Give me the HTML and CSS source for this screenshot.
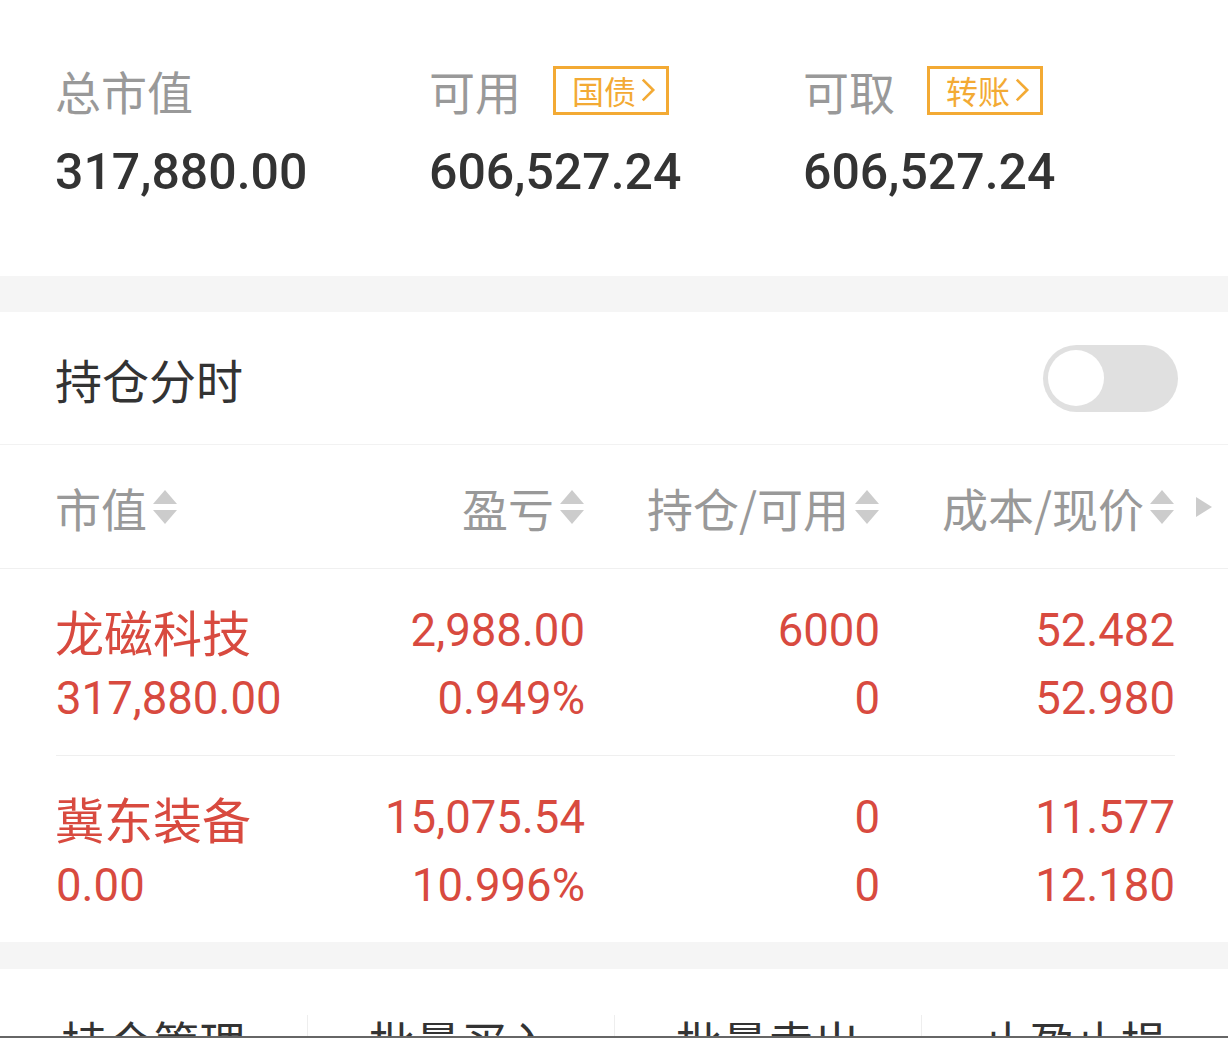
FILE: index.html
```html
<!DOCTYPE html>
<html lang="zh-CN">
<head>
  <meta charset="UTF-8" />
  <meta name="viewport" content="width=device-width, initial-scale=1" />
  <title>持仓</title>
  <link rel="stylesheet" href="styles.css">
</head>
<body>
  <div class="page">
    <div class="summary">
      <div class="summary-item">
        <div class="summary-label"><span>总市值</span></div>
        <div class="summary-value">317,880.00</div>
      </div>
      <div class="summary-item">
        <div class="summary-label"><span>可用</span><span class="tag">国债<svg viewBox="0 0 12 20" width="16" height="26"><path d="M2 2 L10 10 L2 18" fill="none" stroke="currentColor" stroke-width="2"/></svg></span></div>
        <div class="summary-value">606,527.24</div>
      </div>
      <div class="summary-item">
        <div class="summary-label"><span>可取</span><span class="tag">转账<svg viewBox="0 0 12 20" width="16" height="26"><path d="M2 2 L10 10 L2 18" fill="none" stroke="currentColor" stroke-width="2"/></svg></span></div>
        <div class="summary-value">606,527.24</div>
      </div>
    </div>

    <div class="gap"></div>

    <div class="holdings">
      <div class="title-row">
        <span class="title">持仓分时</span>
        <span class="switch"><span class="knob"></span></span>
      </div>

      <div class="head-row">
        <div class="cell left">市值<i class="sort"></i></div>
        <div class="cell">盈亏<i class="sort"></i></div>
        <div class="cell">持仓/可用<i class="sort"></i></div>
        <div class="cell">成本/现价<i class="sort"></i></div>
        <i class="more"></i>
      </div>

      <div class="rows">
        <div class="row">
          <div class="cell left"><div class="name">龙磁科技</div><div>317,880.00</div></div>
          <div class="cell"><div>2,988.00</div><div>0.949%</div></div>
          <div class="cell"><div>6000</div><div>0</div></div>
          <div class="cell"><div>52.482</div><div>52.980</div></div>
        </div>
        <div class="row">
          <div class="cell left"><div class="name">冀东装备</div><div>0.00</div></div>
          <div class="cell"><div>15,075.54</div><div>10.996%</div></div>
          <div class="cell"><div>0</div><div>0</div></div>
          <div class="cell"><div>11.577</div><div>12.180</div></div>
        </div>
      </div>
    </div>

    <div class="gap small"></div>

    <div class="actions">
      <div class="action">持仓管理</div>
      <div class="action">批量买入</div>
      <div class="action">批量卖出</div>
      <div class="action">止盈止损</div>
    </div>
    <div class="bottom-line"></div>
  </div>
</body>
</html>
```

FILE: styles.css
```css
body {
  margin: 0;
  font-family: Roboto, "Noto Sans CJK SC", sans-serif;
  background: #fff;
  color: #333;
}

.page {
  width: 1228px;
  height: 1038px;
  overflow: hidden;
}

.summary {
  display: flex;
  padding: 60px 0 74px 55px;
  height: 142px;
}

.summary-item {
  width: 374px;
}

.summary-label {
  display: flex;
  align-items: center;
  gap: 32px;
  height: 60px;
  font-family: "Noto Sans CJK SC", sans-serif;
  font-size: 46px;
  color: #999;
}

.tag {
  display: inline-flex;
  align-items: center;
  height: 43px;
  padding: 0 10px 0 16px;
  border: 3px solid #f3aa34;
  color: #f3aa34;
  font-size: 32px;
  line-height: 1;
}

.tag svg {
  margin-left: 4px;
}

.summary-value {
  margin-top: 22px;
  height: 60px;
  line-height: 60px;
  font-size: 50px;
  font-weight: 500;
  color: #333;
}

.gap {
  height: 36px;
  background: #f5f5f5;
}

.gap.small {
  height: 27px;
}

.title-row {
  display: flex;
  align-items: center;
  justify-content: space-between;
  height: 132px;
  padding: 0 50px 0 55px;
  border-bottom: 1px solid #f2f2f2;
}

.title {
  font-family: "Noto Sans CJK SC", sans-serif;
  font-size: 47px;
  color: #333;
}

.switch {
  display: flex;
  align-items: center;
  width: 135px;
  height: 67px;
  border-radius: 34px;
  background: #e0e0e0;
  padding: 0 5px;
  box-sizing: border-box;
}

.knob {
  width: 56px;
  height: 56px;
  border-radius: 50%;
  background: #fff;
}

.head-row,
.row {
  display: grid;
  grid-template-columns: 234px 295px 295px 295px;
}

.head-row {
  position: relative;
  height: 123px;
  align-items: center;
  padding: 0 53px 0 55px;
  border-bottom: 1px solid #f0f0f0;
  font-family: "Noto Sans CJK SC", sans-serif;
  font-size: 46px;
  color: #999;
}

.head-row .cell {
  display: flex;
  align-items: center;
  justify-content: flex-end;
}

.head-row .cell.left {
  justify-content: flex-start;
}

.sort {
  display: inline-flex;
  flex-direction: column;
  gap: 6px;
  margin-left: 6px;
}

.sort::before,
.sort::after {
  content: "";
  width: 0;
  height: 0;
  border-left: 12px solid transparent;
  border-right: 12px solid transparent;
}

.sort::before {
  border-bottom: 14px solid #ccc;
}

.sort::after {
  border-top: 14px solid #ccc;
}

.more {
  position: absolute;
  right: 16px;
  top: 52px;
  width: 0;
  height: 0;
  border-top: 10px solid transparent;
  border-bottom: 10px solid transparent;
  border-left: 16px solid #ccc;
}

.rows {
  padding: 0 53px 0 56px;
}

.row {
  padding: 28px 0 22px;
  border-bottom: 1px solid #efefef;
  color: #d84a3f;
  font-size: 45.5px;
  line-height: 68px;
}

.row:last-child {
  border-bottom: none;
}

.row .cell {
  text-align: right;
}

.row .cell.left {
  text-align: left;
}

.name {
  margin-left: -1px;
  font-family: "Noto Sans CJK SC", sans-serif;
  font-size: 49px;
}

.actions {
  display: grid;
  grid-template-columns: repeat(4, 1fr);
  height: 67px;
  overflow: hidden;
}

.action {
  margin-top: 46px;
  border-left: 1px solid #eee;
  text-align: center;
  font-family: "Noto Sans CJK SC", sans-serif;
  font-size: 46px;
  line-height: 50px;
  color: #333;
}

.action:first-child {
  border-left: none;
}

.bottom-line {
  height: 3px;
  background: #666;
}
```
